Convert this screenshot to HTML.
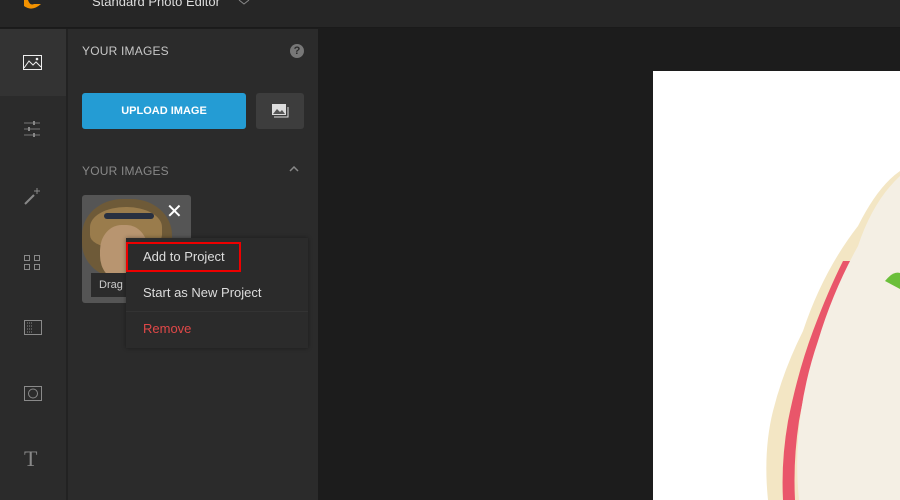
<!DOCTYPE html>
<html><head><style>
*{margin:0;padding:0;box-sizing:border-box}
body{width:900px;height:500px;overflow:hidden;background:#1c1c1c;font-family:"Liberation Sans",sans-serif;position:relative}
.top{position:absolute;left:0;top:0;width:900px;height:28px;background:#262626;border-bottom:1px solid #1a1a1a}
.rail{position:absolute;left:0;top:29px;width:66px;height:471px;background:#2b2b2b}
.sep{position:absolute;left:66px;top:29px;width:2px;height:471px;background:#222}
.panel{position:absolute;left:68px;top:29px;width:250px;height:471px;background:#2b2b2b}
.abs{position:absolute}
.t{color:#c8c8c8;font-size:12px;letter-spacing:.2px}
.ic{position:absolute;left:22px;stroke:#8a8a8a;fill:none}
</style></head><body>
<div class="top">
<svg class="abs" style="left:22px;top:0" width="20" height="10"><path d="M2 0 L2 6 Q10 12 19 4 L12 4 Q8 6 6 0Z" fill="#f39200"/></svg>
<div class="abs" style="left:92px;top:-6px;color:#ddd;font-size:13px">Standard Photo Editor</div>
<svg class="abs" style="left:238px;top:0" width="12" height="6"><path d="M1 0 L6 4 L11 0" stroke="#888" fill="none"/></svg>
</div>
<div class="rail">
<div class="abs" style="left:0;top:0;width:66px;height:67px;background:#333"></div>
<svg class="ic" style="top:24px" width="22" height="20"><rect x="1.5" y="2.5" width="18" height="14" stroke="#eee"/><path d="M2 15 L7 8 L11 12 L14 9 L19 14" stroke="#eee"/><circle cx="15" cy="6" r="1.3" fill="#eee" stroke="none"/></svg>
<svg class="ic" style="top:90px" width="22" height="20"><path d="M2 4h16M2 10h16M2 16h16" stroke="#777"/><path d="M12 2v4M7 8v4M12 14v4" stroke="#888" stroke-width="2"/></svg>
<svg class="ic" style="top:156px" width="22" height="22"><path d="M3 19 L12 10" stroke="#888" stroke-width="2"/><path d="M15 3v6M12 6h6" stroke="#888"/></svg>
<svg class="ic" style="top:224px" width="22" height="20"><rect x="2.5" y="2.5" width="5" height="5"/><rect x="12.5" y="2.5" width="5" height="5"/><rect x="2.5" y="11.5" width="5" height="5"/><rect x="12.5" y="11.5" width="5" height="5"/></svg>
<svg class="ic" style="top:289px" width="22" height="20"><rect x="2.5" y="2.5" width="17" height="14"/><path d="M5 5h6M5 8h6M5 11h6M5 14h6" stroke-dasharray="1 1"/></svg>
<svg class="ic" style="top:355px" width="22" height="20"><rect x="2.5" y="2.5" width="17" height="14"/><circle cx="11" cy="9.5" r="4.5"/></svg>
<div class="abs" style="left:24px;top:417px;color:#888;font-family:'Liberation Serif',serif;font-size:22px">T</div>
</div>
<div class="sep"></div>
<div class="panel">
<div class="abs t" style="left:14px;top:15px">YOUR IMAGES</div>
<div class="abs" style="left:222px;top:15px;width:14px;height:14px;border-radius:50%;background:#777;color:#2b2b2b;font-size:11px;font-weight:bold;text-align:center;line-height:14px">?</div>
<div class="abs" style="left:14px;top:64px;width:164px;height:36px;background:#249cd4;border-radius:3px;color:#fff;font-size:11px;font-weight:bold;text-align:center;line-height:36px">UPLOAD IMAGE</div>
<div class="abs" style="left:188px;top:64px;width:48px;height:36px;background:#3d3d3d;border-radius:3px"></div>
<svg class="abs" style="left:203px;top:74px" width="18" height="16"><rect x="1" y="1" width="14" height="11" fill="#ddd"/><path d="M2 11 L6 6 L9 9 L11 7 L14 11Z" fill="#555"/><path d="M3 14h14V4" stroke="#ddd" fill="none"/></svg>
<div class="abs t" style="left:14px;top:135px;color:#888">YOUR IMAGES</div>
<svg class="abs" style="left:221px;top:137px" width="10" height="7"><path d="M1 5 L5 1 L9 5" stroke="#888" fill="none" stroke-width="1.5"/></svg>
<div class="abs" style="left:14px;top:166px;width:109px;height:108px;background:#555;border-radius:3px;overflow:hidden">
<div class="abs" style="left:0;top:4px;width:90px;height:80px;border-radius:45%;background:#6e5a38"></div>
<div class="abs" style="left:8px;top:12px;width:72px;height:40px;border-radius:50% 50% 30% 30%;background:#9a7c4c"></div>
<div class="abs" style="left:22px;top:18px;width:50px;height:6px;background:#283040;border-radius:3px"></div>
<div class="abs" style="left:18px;top:30px;width:48px;height:56px;border-radius:45%;background:#b89570"></div>
<div class="abs" style="left:9px;top:78px;width:60px;height:24px;background:#2b2b2b;color:#ccc;font-size:11px;padding:6px 8px">Drag</div>
</div>
<div class="abs" style="left:98px;top:175px;color:#fff;font-size:20px;line-height:16px">✕</div>
</div>
<div class="abs" style="left:126px;top:238px;width:182px;height:110px;background:#2b2b2b;box-shadow:0 0 4px rgba(0,0,0,.4)"></div>
<div class="abs" style="left:126px;top:242px;width:115px;height:30px;border:2px solid #e00"></div>
<div class="abs" style="left:143px;top:249px;color:#ddd;font-size:13px">Add to Project</div>
<div class="abs" style="left:143px;top:285px;color:#ddd;font-size:13px">Start as New Project</div>
<div class="abs" style="left:126px;top:311px;width:182px;height:1px;background:#333"></div>
<div class="abs" style="left:143px;top:321px;color:#e04848;font-size:13px">Remove</div>
<div class="abs" style="left:653px;top:71px;width:247px;height:429px;background:#fff;overflow:hidden">
<svg width="247" height="429">
<path d="M247 100 Q225 115 205 155 Q170 200 150 260 Q130 300 120 340 Q110 380 115 429 L247 429Z" fill="#f3e6c4"/>
<path d="M190 190 Q175 220 160 260 Q145 300 135 350 Q128 390 130 429 L142 429 Q140 390 146 350 Q155 300 170 260 Q185 220 200 190Z" fill="#e9566a"/>
<path d="M247 105 Q220 130 205 175 Q180 220 165 270 Q148 320 145 370 Q143 400 146 429 L247 429Z" fill="#f4efe4"/>
<path d="M232 210 Q240 200 247 202 L247 218Z" fill="#6bbf3a"/>
</svg></div>
</body></html>
